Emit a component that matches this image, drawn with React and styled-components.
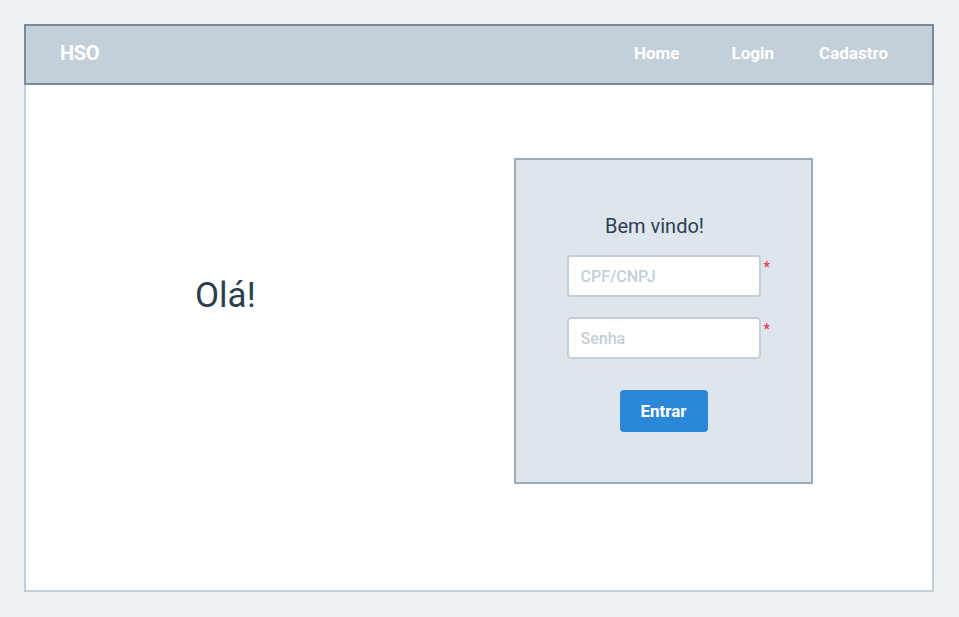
import React from "react";
import styled, { createGlobalStyle } from "styled-components";

const GlobalStyle = createGlobalStyle`
  html, body {
    margin: 0;
    padding: 0;
    background: #eef2f5;
    font-family: Roboto, "Liberation Sans", sans-serif;
  }
  * {
    box-sizing: border-box;
  }
`;

const Page = styled.div`
  padding: 24px 25px 25px 24px;
  height: 617px;
`;

const Frame = styled.div`
  height: 568px;
  display: flex;
  flex-direction: column;
  background: #ffffff;
  border: 2px solid #c3cfd9;
  border-top: none;
`;

const Header = styled.header`
  display: flex;
  align-items: center;
  justify-content: space-between;
  height: 61px;
  margin: 0 -2px;
  padding: 0 44px 3px 34px;
  background: #c3cfd9;
  border: 2px solid #7b8a99;
`;

const Brand = styled.div`
  font-size: 20px;
  font-weight: 700;
  color: #ffffff;
  letter-spacing: -0.4px;
`;

const Nav = styled.nav`
  display: flex;
  gap: 45px;
`;

const NavLink = styled.a`
  font-size: 17px;
  font-weight: 700;
  color: #ffffff;
  text-decoration: none;
  cursor: pointer;
  &:first-child {
    margin-right: 7px;
  }
`;

const Body = styled.main`
  flex: 1;
  display: flex;
  align-items: flex-start;
  padding: 73px 119px 0 169px;
`;

const Greeting = styled.h1`
  margin: 119px 0 0;
  font-size: 35px;
  font-weight: 400;
  color: #2c3e50;
  line-height: 38px;
`;

const Card = styled.form`
  margin-left: auto;
  width: 299px;
  height: 326px;
  display: flex;
  flex-direction: column;
  align-items: center;
  padding-top: 54px;
  background: #dfe5ed;
  border: 2px solid #9aabba;
`;

const Title = styled.h2`
  margin: 0 18px 17px 0;
  font-size: 20px;
  font-weight: 400;
  line-height: 24px;
  color: #2c3e50;
`;

const FieldRow = styled.div`
  position: relative;
  margin-bottom: 20px;
`;

const Input = styled.input`
  display: block;
  width: 194px;
  height: 42px;
  padding: 0 12px;
  border: 2px solid #c3cfd9;
  border-radius: 4px;
  background: #ffffff;
  font-family: inherit;
  font-size: 16px;
  font-weight: 500;
  color: #2c3e50;
  outline: none;
  &::placeholder {
    color: #c3cfd9;
  }
`;

const Required = styled.span`
  position: absolute;
  left: 197px;
  top: 4px;
  font-size: 14px;
  font-weight: 700;
  color: #e0405f;
`;

const Button = styled.button`
  margin-top: 11px;
  width: 88px;
  height: 42px;
  border: none;
  border-radius: 4px;
  background: #2b88d8;
  color: #ffffff;
  font-family: inherit;
  font-size: 17px;
  font-weight: 700;
  cursor: pointer;
`;

const App = () => {
  return (
    <>
      <GlobalStyle />
      <Page>
        <Frame>
          <Header>
            <Brand>HSO</Brand>
            <Nav>
              <NavLink>Home</NavLink>
              <NavLink>Login</NavLink>
              <NavLink>Cadastro</NavLink>
            </Nav>
          </Header>
          <Body>
            <Greeting>Olá!</Greeting>
            <Card onSubmit={(e) => e.preventDefault()}>
              <Title>Bem vindo!</Title>
              <FieldRow>
                <Input placeholder="CPF/CNPJ" />
                <Required>*</Required>
              </FieldRow>
              <FieldRow>
                <Input type="password" placeholder="Senha" />
                <Required>*</Required>
              </FieldRow>
              <Button type="submit">Entrar</Button>
            </Card>
          </Body>
        </Frame>
      </Page>
    </>
  );
};

export default App;
